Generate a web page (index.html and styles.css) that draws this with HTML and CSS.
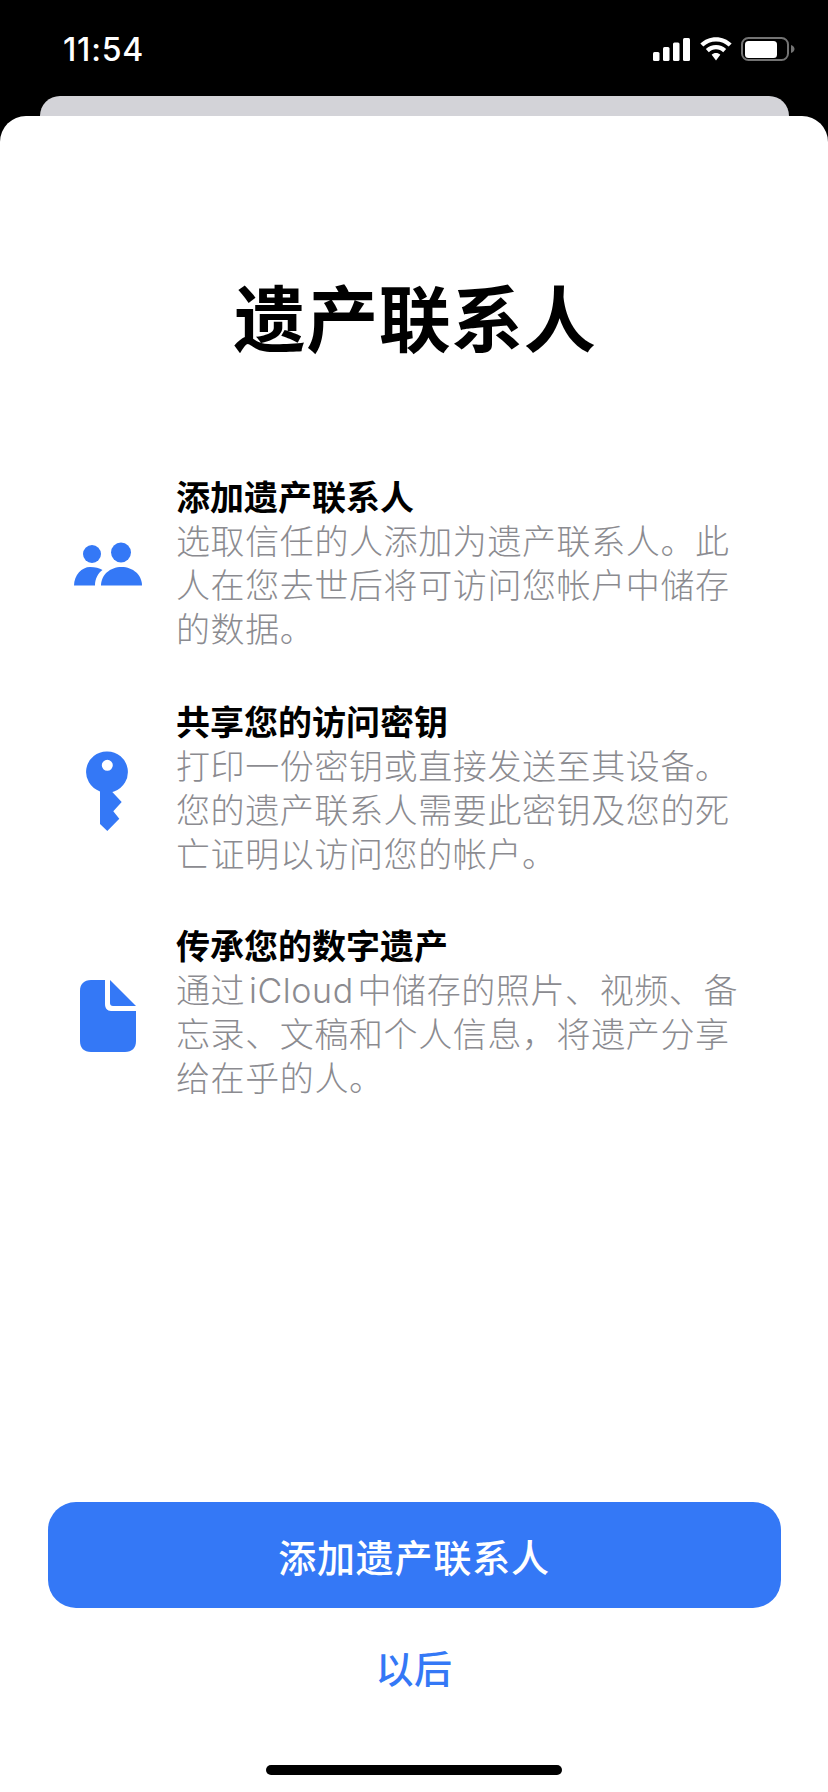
FILE: index.html
```html
<!DOCTYPE html>
<html lang="zh-CN">
<head>
<meta charset="utf-8">
<title>遗产联系人</title>
<link rel="stylesheet" href="styles.css">
</head>
<body>
<div class="screen">
  <header class="status">
    <span class="time">11:54</span>
    <div class="status-icons">
      <svg width="38" height="23" viewBox="0 0 38 23"><rect x="0" y="14" width="6.500" height="9" rx="1.500"/><rect x="10" y="9" width="6.500" height="14" rx="1.500"/><rect x="20" y="4.500" width="6.500" height="18.500" rx="1.500"/><rect x="30" y="0" width="7" height="23" rx="1.500"/></svg>
      <svg width="32" height="24" viewBox="2 1.500 28 21"><path d="M16 5.500C20.300 5.500 24.200 7.200 27.100 9.900L29.700 7.200C26.100 3.800 21.300 1.700 16 1.700S5.900 3.800 2.300 7.200L4.900 9.900C7.800 7.200 11.700 5.500 16 5.500Z"/><path d="M16 12.300C18.400 12.300 20.600 13.200 22.300 14.800L24.900 12.100C22.500 9.900 19.400 8.600 16 8.600S9.500 9.900 7.100 12.100L9.700 14.800C11.400 13.200 13.600 12.300 16 12.300Z"/><path d="M16 15.600C14.500 15.600 13.200 16.200 12.200 17.100L16 22L19.800 17.100C18.800 16.200 17.500 15.600 16 15.600Z"/></svg>
      <svg width="56" height="24" viewBox="0 0 56 24"><rect x="1" y="1" width="46" height="22" rx="6.500" fill="none" stroke="#fff" stroke-opacity=".45" stroke-width="2"/><rect x="4" y="4" width="32" height="17" rx="3.500" fill="#fff"/><path d="M50 8C52.500 9 53.500 10.500 53.500 12S52.500 15 50 16Z" fill="#fff" fill-opacity=".45"/></svg>
    </div>
  </header>
  <div class="back-card"></div>
  <main class="sheet">
    <h1 class="title">遗产联系人</h1>
    <section class="features">
      <article class="feature">
        <div class="icon-cell">
          <svg width="68" height="44" viewBox="0 0 68 44"><circle cx="18" cy="12" r="9"/><circle cx="47" cy="10.500" r="10"/><path d="M0 43.500C0 33 8 25 16 25C21 25 25.500 26 28.500 28C24 31 21 37 21 43.500Z"/><path d="M27 43.500C27 33 36 25 47.500 25S68 33 68 43.500Z"/></svg>
        </div>
        <div class="copy">
          <h2>添加遗产联系人</h2>
          <p>选取信任的人添加为遗产联系人。此人在您去世后将可访问您帐户中储存的数据。</p>
        </div>
      </article>
      <article class="feature">
        <div class="icon-cell icon-low">
          <svg width="44" height="81" viewBox="0 0 44 81"><path fill-rule="evenodd" d="M21.300 .5A20.500 20.500 0 0 1 28 40.400L26.300 41L35.700 51L27.300 60.300L33.300 67.700L21.300 80L14 73V40.400A20.500 20.500 0 0 1 21.300 .5ZM21.300 8.800A5.500 5.500 0 1 0 21.300 19.800A5.500 5.500 0 1 0 21.300 8.800Z"/></svg>
        </div>
        <div class="copy">
          <h2>共享您的访问密钥</h2>
          <p>打印一份密钥或直接发送至其设备。您的遗产联系人需要此密钥及您的死亡证明以访问您的帐户。</p>
        </div>
      </article>
      <article class="feature">
        <div class="icon-cell icon-low">
          <svg width="56" height="72" viewBox="0 0 56 72"><path d="M11 0H25V24C25 28 27 31 31 31H56V61C56 68 52 72 45 72H11C4 72 0 68 0 61V11C0 4 4 0 11 0Z"/><path d="M30 0L56 26H33C31 26 30 25 30 23Z"/></svg>
        </div>
        <div class="copy">
          <h2>传承您的数字遗产</h2>
          <p>通过&hairsp;iCloud&hairsp;中储存的照片、视频、备忘录、文稿和个人信息，将遗产分享给在乎的人。</p>
        </div>
      </article>
    </section>
    <footer class="actions">
      <button class="primary">添加遗产联系人</button>
      <button class="secondary">以后</button>
    </footer>
    <div class="home-indicator"></div>
  </main>
</div>
</body>
</html>
```
FILE: styles.css
```css
* { box-sizing: border-box; }
html, body { margin: 0; padding: 0; }
body { width: 828px; height: 1792px; overflow: hidden; background: #000; font-family: "Inter", "Noto Sans CJK SC", sans-serif; }
.screen { width: 828px; height: 1792px; display: flex; flex-direction: column; position: relative; }
.status { height: 96px; flex: none; display: flex; align-items: center; justify-content: space-between; padding: 2px 31px 0 63px; color: #fff; }
.time { font-size: 32px; font-weight: 500; letter-spacing: .8px; }
.status-icons { display: flex; align-items: center; gap: 9px; }
.status-icons svg { fill: #fff; display: block; }
.back-card { position: absolute; left: 40px; top: 96px; width: 749px; height: 40px; background: #d3d3d8; border-radius: 20px 20px 0 0; }
.sheet { position: relative; flex: 1; background: #fff; border-radius: 26px 26px 0 0; margin-top: 20px; display: flex; flex-direction: column; }
.title { margin: 0; padding: 162px 0 0 2px; text-align: center; font-size: 72px; line-height: 84px; font-weight: 700; color: #000; letter-spacing: .5px; }
.features { margin-top: 114px; display: flex; flex-direction: column; gap: 48.5px; }
.feature { display: flex; align-items: center; padding-left: 72px; }
.icon-cell { width: 72px; flex: none; display: flex; justify-content: center; margin-right: 32px; }
.icon-low { padding-top: 5px; }
.icon-cell svg { fill: #3478f6; display: block; }
.copy { width: 566px; }
.copy h2 { margin: 0; font-size: 34px; line-height: 44px; font-weight: 600; color: #000; }
.copy p { margin: 0; font-size: 34px; line-height: 44px; font-weight: 300; letter-spacing: .6px; color: #8b8b90; }
.actions { position: absolute; left: 48px; right: 48px; top: 1386px; display: flex; flex-direction: column; align-items: center; }
.primary { width: 733px; height: 106px; border: 0; border-radius: 28px; background: #3478f6; color: #fff; font: 500 38px "Noto Sans CJK SC", sans-serif; letter-spacing: .8px; }
.secondary { margin-top: 26px; height: 64px; border: 0; background: none; color: #3478f6; font: 500 38px "Noto Sans CJK SC", sans-serif; letter-spacing: .4px; }
.home-indicator { position: absolute; left: 266px; top: 1649px; width: 296px; height: 10px; border-radius: 5px; background: #000; }
```
